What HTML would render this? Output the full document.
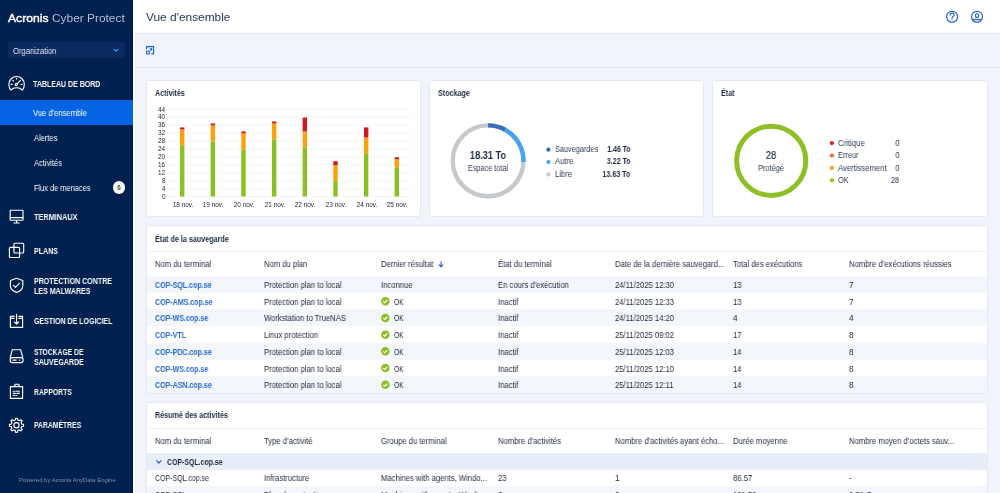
<!DOCTYPE html>
<html><head><meta charset="utf-8">
<style>
*{box-sizing:border-box;margin:0;padding:0}
html,body{width:1000px;height:493px;overflow:hidden;background:#f1f5fb;font-family:"Liberation Sans",sans-serif;color:#243550}
.t{position:absolute;line-height:1;white-space:nowrap;will-change:transform}
.b{position:absolute}
svg{position:absolute;left:0;top:0;overflow:visible}
</style></head><body>
<div class="b" style="left:0px;top:0px;width:133px;height:493px;background:#00214f;"></div>
<div class="b" style="left:132px;top:0px;width:1px;height:493px;background:#001645;"></div>
<div class="b" style="left:8.3px;top:41.8px;width:116.7px;height:16.7px;background:#0a2b5f;border-radius:2.5px"></div>
<div class="b" style="left:0px;top:100px;width:133px;height:25px;background:#0363e2;"></div>
<div class="t" style="top:13px;font-size:11.5px;color:#ffffff;left:8.40px;transform:scaleX(1.056);transform-origin:left 0;-webkit-text-stroke:0.4px #ffffff;">Acronis</div>
<div class="t" style="top:13px;font-size:11.5px;color:#b4bed2;left:51.50px;transform:scaleX(1.034);transform-origin:left 0;">Cyber Protect</div>
<div class="t" style="top:48px;font-size:8.2px;color:#dfe6f2;left:13.00px;transform:scaleX(0.936);transform-origin:left 0;">Organization</div>
<div class="t" style="top:81px;font-size:8.2px;color:#fafbfd;font-weight:bold;left:33.20px;transform:scaleX(0.858);transform-origin:left 0;">TABLEAU DE BORD</div>
<div class="t" style="top:110px;font-size:8.2px;color:#ffffff;left:33.20px;transform:scaleX(0.929);transform-origin:left 0;">Vue d'ensemble</div>
<div class="t" style="top:135px;font-size:8.2px;color:#fafbfd;left:33.50px;transform:scaleX(0.915);transform-origin:left 0;">Alertes</div>
<div class="t" style="top:160px;font-size:8.2px;color:#fafbfd;left:33.50px;transform:scaleX(0.915);transform-origin:left 0;">Activités</div>
<div class="t" style="top:185px;font-size:8.2px;color:#fafbfd;left:33.50px;transform:scaleX(0.905);transform-origin:left 0;">Flux de menaces</div>
<div class="t" style="top:214px;font-size:8.2px;color:#fafbfd;font-weight:bold;left:33.50px;transform:scaleX(0.892);transform-origin:left 0;">TERMINAUX</div>
<div class="t" style="top:248px;font-size:8.2px;color:#fafbfd;font-weight:bold;left:33.50px;transform:scaleX(0.862);transform-origin:left 0;">PLANS</div>
<div class="t" style="top:278px;font-size:8.2px;color:#fafbfd;font-weight:bold;left:33.50px;transform:scaleX(0.861);transform-origin:left 0;">PROTECTION CONTRE</div>
<div class="t" style="top:288px;font-size:8.2px;color:#fafbfd;font-weight:bold;left:33.50px;transform:scaleX(0.862);transform-origin:left 0;">LES MALWARES</div>
<div class="t" style="top:318px;font-size:8.2px;color:#fafbfd;font-weight:bold;left:33.50px;transform:scaleX(0.857);transform-origin:left 0;">GESTION DE LOGICIEL</div>
<div class="t" style="top:349px;font-size:8.2px;color:#fafbfd;font-weight:bold;left:33.50px;transform:scaleX(0.825);transform-origin:left 0;">STOCKAGE DE</div>
<div class="t" style="top:359px;font-size:8.2px;color:#fafbfd;font-weight:bold;left:33.50px;transform:scaleX(0.862);transform-origin:left 0;">SAUVEGARDE</div>
<div class="t" style="top:389px;font-size:8.2px;color:#fafbfd;font-weight:bold;left:33.50px;transform:scaleX(0.832);transform-origin:left 0;">RAPPORTS</div>
<div class="t" style="top:422px;font-size:8.2px;color:#fafbfd;font-weight:bold;left:33.50px;transform:scaleX(0.833);transform-origin:left 0;">PARAMÈTRES</div>
<div class="t" style="top:478px;font-size:5.95px;color:#8290ab;left:18.50px;">Powered by Acronis AnyData Engine</div>
<div class="b" style="left:112.7px;top:181.3px;width:12.6px;height:12.6px;background:#fff;border-radius:50%"></div>
<div class="t" style="top:185px;font-size:6.3px;color:#3e4658;font-weight:bold;left:-30.90px;width:300px;text-align:center;">6</div>
<div class="b" style="left:133px;top:0px;width:867px;height:33px;background:#fff;"></div>
<div class="b" style="left:133px;top:0px;width:2px;height:493px;background:#fff;"></div>
<div class="b" style="left:135px;top:33px;width:865px;height:1px;background:#dde6f4;"></div>
<div class="b" style="left:135px;top:67px;width:865px;height:1px;background:#e3eaf6;"></div>
<div class="t" style="top:12px;font-size:11.5px;color:#273650;left:146.00px;transform:scaleX(1.034);transform-origin:left 0;">Vue d'ensemble</div>
<div class="b" style="left:146px;top:80px;width:275px;height:137px;background:#fff;border:1px solid #e4e9f1;border-radius:3px"></div>
<div class="b" style="left:429px;top:80px;width:275px;height:137px;background:#fff;border:1px solid #e4e9f1;border-radius:3px"></div>
<div class="b" style="left:712px;top:80px;width:276px;height:137px;background:#fff;border:1px solid #e4e9f1;border-radius:3px"></div>
<div class="b" style="left:146px;top:225px;width:842px;height:169px;background:#fff;border:1px solid #e4e9f1;border-radius:3px"></div>
<div class="b" style="left:146px;top:402px;width:842px;height:120px;background:#fff;border:1px solid #e4e9f1;border-radius:3px"></div>
<div class="t" style="top:90px;font-size:8.2px;color:#1e2a40;font-weight:bold;left:154.70px;transform:scaleX(0.875);transform-origin:left 0;">Activités</div>
<div class="t" style="top:90px;font-size:8.2px;color:#1e2a40;font-weight:bold;left:437.70px;transform:scaleX(0.875);transform-origin:left 0;">Stockage</div>
<div class="t" style="top:90px;font-size:8.2px;color:#1e2a40;font-weight:bold;left:721.30px;transform:scaleX(0.875);transform-origin:left 0;">État</div>
<div class="t" style="top:236px;font-size:8.2px;color:#1e2a40;font-weight:bold;left:154.70px;transform:scaleX(0.875);transform-origin:left 0;">État de la sauvegarde</div>
<div class="t" style="top:412px;font-size:8.2px;color:#1e2a40;font-weight:bold;left:154.70px;transform:scaleX(0.875);transform-origin:left 0;">Résumé des activités</div>
<svg width="1000" height="493"><line x1="167.4" x2="411.5" y1="196.50" y2="196.50" stroke="#edf1f7" stroke-width="0.8"/><line x1="167.4" x2="411.5" y1="188.55" y2="188.55" stroke="#edf1f7" stroke-width="0.8"/><line x1="167.4" x2="411.5" y1="180.60" y2="180.60" stroke="#edf1f7" stroke-width="0.8"/><line x1="167.4" x2="411.5" y1="172.66" y2="172.66" stroke="#edf1f7" stroke-width="0.8"/><line x1="167.4" x2="411.5" y1="164.71" y2="164.71" stroke="#edf1f7" stroke-width="0.8"/><line x1="167.4" x2="411.5" y1="156.76" y2="156.76" stroke="#edf1f7" stroke-width="0.8"/><line x1="167.4" x2="411.5" y1="148.81" y2="148.81" stroke="#edf1f7" stroke-width="0.8"/><line x1="167.4" x2="411.5" y1="140.86" y2="140.86" stroke="#edf1f7" stroke-width="0.8"/><line x1="167.4" x2="411.5" y1="132.92" y2="132.92" stroke="#edf1f7" stroke-width="0.8"/><line x1="167.4" x2="411.5" y1="124.97" y2="124.97" stroke="#edf1f7" stroke-width="0.8"/><line x1="167.4" x2="411.5" y1="117.02" y2="117.02" stroke="#edf1f7" stroke-width="0.8"/><line x1="167.4" x2="411.5" y1="109.07" y2="109.07" stroke="#edf1f7" stroke-width="0.8"/><rect x="180.00" y="145.34" width="4.4" height="51.16" fill="#8cbf21"/><rect x="180.00" y="129.44" width="4.4" height="15.90" fill="#fca10b"/><rect x="180.00" y="127.45" width="4.4" height="1.99" fill="#d0191f"/><rect x="210.66" y="141.36" width="4.4" height="55.14" fill="#8cbf21"/><rect x="210.66" y="125.47" width="4.4" height="15.90" fill="#fca10b"/><rect x="210.66" y="123.48" width="4.4" height="1.99" fill="#d0191f"/><rect x="241.32" y="149.31" width="4.4" height="47.19" fill="#8cbf21"/><rect x="241.32" y="133.42" width="4.4" height="15.90" fill="#fca10b"/><rect x="241.32" y="131.43" width="4.4" height="1.99" fill="#d0191f"/><rect x="271.98" y="139.38" width="4.4" height="57.12" fill="#8cbf21"/><rect x="271.98" y="123.48" width="4.4" height="15.90" fill="#fca10b"/><rect x="271.98" y="121.49" width="4.4" height="1.99" fill="#d0191f"/><rect x="302.64" y="147.32" width="4.4" height="49.18" fill="#8cbf21"/><rect x="302.64" y="131.43" width="4.4" height="15.90" fill="#fca10b"/><rect x="302.64" y="117.52" width="4.4" height="13.91" fill="#d0191f"/><rect x="333.30" y="181.10" width="4.4" height="15.40" fill="#8cbf21"/><rect x="333.30" y="165.21" width="4.4" height="15.90" fill="#fca10b"/><rect x="333.30" y="161.23" width="4.4" height="3.97" fill="#d0191f"/><rect x="363.96" y="153.29" width="4.4" height="43.21" fill="#8cbf21"/><rect x="363.96" y="137.39" width="4.4" height="15.90" fill="#fca10b"/><rect x="363.96" y="127.45" width="4.4" height="9.94" fill="#d0191f"/><rect x="394.62" y="167.19" width="4.4" height="29.30" fill="#8cbf21"/><rect x="394.62" y="159.25" width="4.4" height="7.95" fill="#fca10b"/><rect x="394.62" y="157.26" width="4.4" height="1.99" fill="#d0191f"/></svg>
<div class="t" style="top:194px;font-size:6.4px;color:#1c2430;right:834.80px;">0</div>
<div class="t" style="top:186px;font-size:6.4px;color:#1c2430;right:834.80px;">4</div>
<div class="t" style="top:178px;font-size:6.4px;color:#1c2430;right:834.80px;">8</div>
<div class="t" style="top:170px;font-size:6.4px;color:#1c2430;right:834.80px;">12</div>
<div class="t" style="top:162px;font-size:6.4px;color:#1c2430;right:834.80px;">16</div>
<div class="t" style="top:154px;font-size:6.4px;color:#1c2430;right:834.80px;">20</div>
<div class="t" style="top:146px;font-size:6.4px;color:#1c2430;right:834.80px;">24</div>
<div class="t" style="top:138px;font-size:6.4px;color:#1c2430;right:834.80px;">28</div>
<div class="t" style="top:130px;font-size:6.4px;color:#1c2430;right:834.80px;">32</div>
<div class="t" style="top:122px;font-size:6.4px;color:#1c2430;right:834.80px;">36</div>
<div class="t" style="top:114px;font-size:6.4px;color:#1c2430;right:834.80px;">40</div>
<div class="t" style="top:107px;font-size:6.4px;color:#1c2430;right:834.80px;">44</div>
<div class="t" style="top:202px;font-size:6.4px;color:#1c2430;left:32.70px;width:300px;text-align:center;">18 nov.</div>
<div class="t" style="top:202px;font-size:6.4px;color:#1c2430;left:63.36px;width:300px;text-align:center;">19 nov.</div>
<div class="t" style="top:202px;font-size:6.4px;color:#1c2430;left:94.02px;width:300px;text-align:center;">20 nov.</div>
<div class="t" style="top:202px;font-size:6.4px;color:#1c2430;left:124.68px;width:300px;text-align:center;">21 nov.</div>
<div class="t" style="top:202px;font-size:6.4px;color:#1c2430;left:155.34px;width:300px;text-align:center;">22 nov.</div>
<div class="t" style="top:202px;font-size:6.4px;color:#1c2430;left:186.00px;width:300px;text-align:center;">23 nov.</div>
<div class="t" style="top:202px;font-size:6.4px;color:#1c2430;left:216.66px;width:300px;text-align:center;">24 nov.</div>
<div class="t" style="top:202px;font-size:6.4px;color:#1c2430;left:247.32px;width:300px;text-align:center;">25 nov.</div>
<svg width="1000" height="493"><circle cx="488.1" cy="160.8" r="35.4" fill="none" stroke="#c5c8cc" stroke-width="4.4"/><path d="M488.100 125.400A35.4 35.4 0 0 1 505.103 129.751" fill="none" stroke="#3a6cb5" stroke-width="4.4"/><path d="M505.103 129.751A35.4 35.4 0 0 1 523.478 162.045" fill="none" stroke="#44a3f2" stroke-width="4.4"/><circle cx="548.4" cy="149.7" r="2.1" fill="#3a6cb5"/><circle cx="548.4" cy="162" r="2.1" fill="#44a3f2"/><circle cx="548.4" cy="174.4" r="2.1" fill="#c5c8cc"/><circle cx="771.2" cy="160.8" r="34.6" fill="none" stroke="#8fbf26" stroke-width="5"/><circle cx="831.9" cy="143.1" r="2.1" fill="#d7262c"/><circle cx="831.9" cy="155.5" r="2.1" fill="#f26a1b"/><circle cx="831.9" cy="167.9" r="2.1" fill="#fca10b"/><circle cx="831.9" cy="180.3" r="2.1" fill="#8fbf26"/></svg>
<div class="t" style="top:151px;font-size:10px;color:#1e2a40;font-weight:bold;left:338.00px;width:300px;text-align:center;transform:scaleX(0.917);transform-origin:center 0;">18.31 To</div>
<div class="t" style="top:165px;font-size:8.2px;color:#2e3a50;left:338.00px;width:300px;text-align:center;transform:scaleX(0.891);transform-origin:center 0;">Espace total</div>
<div class="t" style="top:146px;font-size:8.2px;color:#2e3a50;left:554.70px;transform:scaleX(0.894);transform-origin:left 0;">Sauvegardes</div>
<div class="t" style="top:146px;font-size:8.2px;color:#1e2a40;font-weight:bold;right:369.70px;transform:scaleX(0.846);transform-origin:right 0;">1.46 To</div>
<div class="t" style="top:158px;font-size:8.2px;color:#2e3a50;left:554.70px;transform:scaleX(0.939);transform-origin:left 0;">Autre</div>
<div class="t" style="top:158px;font-size:8.2px;color:#1e2a40;font-weight:bold;right:369.70px;transform:scaleX(0.861);transform-origin:right 0;">3.22 To</div>
<div class="t" style="top:171px;font-size:8.2px;color:#2e3a50;left:554.70px;transform:scaleX(0.938);transform-origin:left 0;">Libre</div>
<div class="t" style="top:171px;font-size:8.2px;color:#1e2a40;font-weight:bold;right:369.70px;transform:scaleX(0.860);transform-origin:right 0;">13.63 To</div>
<div class="t" style="top:151px;font-size:10px;color:#1e2a40;left:621.30px;width:300px;text-align:center;transform:scaleX(0.935);transform-origin:center 0;-webkit-text-stroke:0.2px #243550;">28</div>
<div class="t" style="top:165px;font-size:8.2px;color:#2e3a50;left:621.20px;width:300px;text-align:center;transform:scaleX(0.902);transform-origin:center 0;">Protégé</div>
<div class="t" style="top:140px;font-size:8.2px;color:#2e3a50;left:837.90px;transform:scaleX(0.948);transform-origin:left 0;">Critique</div>
<div class="t" style="top:140px;font-size:8.2px;color:#1e2a40;right:100.80px;transform:scaleX(0.900);transform-origin:right 0;">0</div>
<div class="t" style="top:152px;font-size:8.2px;color:#2e3a50;left:837.90px;transform:scaleX(0.900);transform-origin:left 0;">Erreur</div>
<div class="t" style="top:152px;font-size:8.2px;color:#1e2a40;right:100.80px;transform:scaleX(0.900);transform-origin:right 0;">0</div>
<div class="t" style="top:165px;font-size:8.2px;color:#2e3a50;left:837.90px;transform:scaleX(0.940);transform-origin:left 0;">Avertissement</div>
<div class="t" style="top:165px;font-size:8.2px;color:#1e2a40;right:100.80px;transform:scaleX(0.900);transform-origin:right 0;">0</div>
<div class="t" style="top:177px;font-size:8.2px;color:#2e3a50;left:837.90px;transform:scaleX(0.900);transform-origin:left 0;">OK</div>
<div class="t" style="top:177px;font-size:8.2px;color:#1e2a40;right:100.80px;transform:scaleX(0.900);transform-origin:right 0;">28</div>
<div class="b" style="left:147px;top:251px;width:840px;height:1px;background:#eef2f7;"></div>
<div class="t" style="top:261px;font-size:8.2px;color:#222d40;left:154.70px;transform:scaleX(0.935);transform-origin:left 0;">Nom du terminal</div>
<div class="t" style="top:261px;font-size:8.2px;color:#222d40;left:263.80px;transform:scaleX(0.935);transform-origin:left 0;">Nom du plan</div>
<div class="t" style="top:261px;font-size:8.2px;color:#222d40;left:380.80px;transform:scaleX(0.935);transform-origin:left 0;">Dernier résultat</div>
<div class="t" style="top:261px;font-size:8.2px;color:#222d40;left:498.30px;transform:scaleX(0.935);transform-origin:left 0;">État du terminal</div>
<div class="t" style="top:261px;font-size:8.2px;color:#222d40;left:615.30px;transform:scaleX(0.935);transform-origin:left 0;">Date de la dernière sauvegard...</div>
<div class="t" style="top:261px;font-size:8.2px;color:#222d40;left:732.50px;transform:scaleX(0.935);transform-origin:left 0;">Total des exécutions</div>
<div class="t" style="top:261px;font-size:8.2px;color:#222d40;left:849.30px;transform:scaleX(0.935);transform-origin:left 0;">Nombre d’exécutions réussies</div>
<div class="b" style="left:147px;top:276.0px;width:840px;height:16.71px;background:#f3f6fb;"></div>
<div class="b" style="left:147px;top:309.42px;width:840px;height:16.71px;background:#f3f6fb;"></div>
<div class="b" style="left:147px;top:342.84px;width:840px;height:16.71px;background:#f3f6fb;"></div>
<div class="b" style="left:147px;top:376.26px;width:840px;height:16.71px;background:#f3f6fb;"></div>
<div class="t" style="top:282px;font-size:8.2px;color:#2a6ad0;font-weight:bold;left:154.70px;transform:scaleX(0.860);transform-origin:left 0;">COP-SQL.cop.se</div>
<div class="t" style="top:282px;font-size:8.2px;color:#222d40;left:263.80px;transform:scaleX(0.935);transform-origin:left 0;">Protection plan to local</div>
<div class="t" style="top:282px;font-size:8.2px;color:#222d40;left:380.80px;transform:scaleX(0.935);transform-origin:left 0;">Inconnue</div>
<div class="t" style="top:282px;font-size:8.2px;color:#222d40;left:498.30px;transform:scaleX(0.935);transform-origin:left 0;">En cours d'exécution</div>
<div class="t" style="top:282px;font-size:8.2px;color:#222d40;left:615.30px;transform:scaleX(0.935);transform-origin:left 0;">24/11/2025 12:30</div>
<div class="t" style="top:282px;font-size:8.2px;color:#222d40;left:732.50px;transform:scaleX(0.935);transform-origin:left 0;">13</div>
<div class="t" style="top:282px;font-size:8.2px;color:#222d40;left:849.30px;transform:scaleX(0.935);transform-origin:left 0;">7</div>
<div class="t" style="top:299px;font-size:8.2px;color:#2a6ad0;font-weight:bold;left:154.70px;transform:scaleX(0.860);transform-origin:left 0;">COP-AMS.cop.se</div>
<div class="t" style="top:299px;font-size:8.2px;color:#222d40;left:263.80px;transform:scaleX(0.935);transform-origin:left 0;">Protection plan to local</div>
<div class="t" style="top:299px;font-size:8.2px;color:#222d40;left:393.90px;transform:scaleX(0.819);transform-origin:left 0;">OK</div>
<div class="t" style="top:299px;font-size:8.2px;color:#222d40;left:498.30px;transform:scaleX(0.935);transform-origin:left 0;">Inactif</div>
<div class="t" style="top:299px;font-size:8.2px;color:#222d40;left:615.30px;transform:scaleX(0.935);transform-origin:left 0;">24/11/2025 12:33</div>
<div class="t" style="top:299px;font-size:8.2px;color:#222d40;left:732.50px;transform:scaleX(0.935);transform-origin:left 0;">13</div>
<div class="t" style="top:299px;font-size:8.2px;color:#222d40;left:849.30px;transform:scaleX(0.935);transform-origin:left 0;">7</div>
<div class="t" style="top:315px;font-size:8.2px;color:#2a6ad0;font-weight:bold;left:154.70px;transform:scaleX(0.860);transform-origin:left 0;">COP-WS.cop.se</div>
<div class="t" style="top:315px;font-size:8.2px;color:#222d40;left:263.80px;transform:scaleX(0.935);transform-origin:left 0;">Workstation to TrueNAS</div>
<div class="t" style="top:315px;font-size:8.2px;color:#222d40;left:393.90px;transform:scaleX(0.819);transform-origin:left 0;">OK</div>
<div class="t" style="top:315px;font-size:8.2px;color:#222d40;left:498.30px;transform:scaleX(0.935);transform-origin:left 0;">Inactif</div>
<div class="t" style="top:315px;font-size:8.2px;color:#222d40;left:615.30px;transform:scaleX(0.935);transform-origin:left 0;">24/11/2025 14:20</div>
<div class="t" style="top:315px;font-size:8.2px;color:#222d40;left:732.50px;transform:scaleX(0.935);transform-origin:left 0;">4</div>
<div class="t" style="top:315px;font-size:8.2px;color:#222d40;left:849.30px;transform:scaleX(0.935);transform-origin:left 0;">4</div>
<div class="t" style="top:332px;font-size:8.2px;color:#2a6ad0;font-weight:bold;left:154.70px;transform:scaleX(0.860);transform-origin:left 0;">COP-VTL</div>
<div class="t" style="top:332px;font-size:8.2px;color:#222d40;left:263.80px;transform:scaleX(0.935);transform-origin:left 0;">Linux protection</div>
<div class="t" style="top:332px;font-size:8.2px;color:#222d40;left:393.90px;transform:scaleX(0.819);transform-origin:left 0;">OK</div>
<div class="t" style="top:332px;font-size:8.2px;color:#222d40;left:498.30px;transform:scaleX(0.935);transform-origin:left 0;">Inactif</div>
<div class="t" style="top:332px;font-size:8.2px;color:#222d40;left:615.30px;transform:scaleX(0.935);transform-origin:left 0;">25/11/2025 09:02</div>
<div class="t" style="top:332px;font-size:8.2px;color:#222d40;left:732.50px;transform:scaleX(0.935);transform-origin:left 0;">17</div>
<div class="t" style="top:332px;font-size:8.2px;color:#222d40;left:849.30px;transform:scaleX(0.935);transform-origin:left 0;">8</div>
<div class="t" style="top:349px;font-size:8.2px;color:#2a6ad0;font-weight:bold;left:154.70px;transform:scaleX(0.860);transform-origin:left 0;">COP-PDC.cop.se</div>
<div class="t" style="top:349px;font-size:8.2px;color:#222d40;left:263.80px;transform:scaleX(0.935);transform-origin:left 0;">Protection plan to local</div>
<div class="t" style="top:349px;font-size:8.2px;color:#222d40;left:393.90px;transform:scaleX(0.819);transform-origin:left 0;">OK</div>
<div class="t" style="top:349px;font-size:8.2px;color:#222d40;left:498.30px;transform:scaleX(0.935);transform-origin:left 0;">Inactif</div>
<div class="t" style="top:349px;font-size:8.2px;color:#222d40;left:615.30px;transform:scaleX(0.935);transform-origin:left 0;">25/11/2025 12:03</div>
<div class="t" style="top:349px;font-size:8.2px;color:#222d40;left:732.50px;transform:scaleX(0.935);transform-origin:left 0;">14</div>
<div class="t" style="top:349px;font-size:8.2px;color:#222d40;left:849.30px;transform:scaleX(0.935);transform-origin:left 0;">8</div>
<div class="t" style="top:366px;font-size:8.2px;color:#2a6ad0;font-weight:bold;left:154.70px;transform:scaleX(0.860);transform-origin:left 0;">COP-WS.cop.se</div>
<div class="t" style="top:366px;font-size:8.2px;color:#222d40;left:263.80px;transform:scaleX(0.935);transform-origin:left 0;">Protection plan to local</div>
<div class="t" style="top:366px;font-size:8.2px;color:#222d40;left:393.90px;transform:scaleX(0.819);transform-origin:left 0;">OK</div>
<div class="t" style="top:366px;font-size:8.2px;color:#222d40;left:498.30px;transform:scaleX(0.935);transform-origin:left 0;">Inactif</div>
<div class="t" style="top:366px;font-size:8.2px;color:#222d40;left:615.30px;transform:scaleX(0.935);transform-origin:left 0;">25/11/2025 12:10</div>
<div class="t" style="top:366px;font-size:8.2px;color:#222d40;left:732.50px;transform:scaleX(0.935);transform-origin:left 0;">14</div>
<div class="t" style="top:366px;font-size:8.2px;color:#222d40;left:849.30px;transform:scaleX(0.935);transform-origin:left 0;">8</div>
<div class="t" style="top:382px;font-size:8.2px;color:#2a6ad0;font-weight:bold;left:154.70px;transform:scaleX(0.860);transform-origin:left 0;">COP-ASN.cop.se</div>
<div class="t" style="top:382px;font-size:8.2px;color:#222d40;left:263.80px;transform:scaleX(0.935);transform-origin:left 0;">Protection plan to local</div>
<div class="t" style="top:382px;font-size:8.2px;color:#222d40;left:393.90px;transform:scaleX(0.819);transform-origin:left 0;">OK</div>
<div class="t" style="top:382px;font-size:8.2px;color:#222d40;left:498.30px;transform:scaleX(0.935);transform-origin:left 0;">Inactif</div>
<div class="t" style="top:382px;font-size:8.2px;color:#222d40;left:615.30px;transform:scaleX(0.935);transform-origin:left 0;">25/11/2025 12:11</div>
<div class="t" style="top:382px;font-size:8.2px;color:#222d40;left:732.50px;transform:scaleX(0.935);transform-origin:left 0;">14</div>
<div class="t" style="top:382px;font-size:8.2px;color:#222d40;left:849.30px;transform:scaleX(0.935);transform-origin:left 0;">8</div>
<svg width="1000" height="493"><circle cx="385.4" cy="301.21" r="4.25" fill="#8fbf26"/><path d="M383.3 301.31l1.4 1.4 2.7-2.7" fill="none" stroke="#fff" stroke-width="1.1"/><circle cx="385.4" cy="317.92" r="4.25" fill="#8fbf26"/><path d="M383.3 318.02l1.4 1.4 2.7-2.7" fill="none" stroke="#fff" stroke-width="1.1"/><circle cx="385.4" cy="334.63" r="4.25" fill="#8fbf26"/><path d="M383.3 334.73l1.4 1.4 2.7-2.7" fill="none" stroke="#fff" stroke-width="1.1"/><circle cx="385.4" cy="351.34" r="4.25" fill="#8fbf26"/><path d="M383.3 351.44l1.4 1.4 2.7-2.7" fill="none" stroke="#fff" stroke-width="1.1"/><circle cx="385.4" cy="368.05" r="4.25" fill="#8fbf26"/><path d="M383.3 368.15l1.4 1.4 2.7-2.7" fill="none" stroke="#fff" stroke-width="1.1"/><circle cx="385.4" cy="384.76" r="4.25" fill="#8fbf26"/><path d="M383.3 384.86l1.4 1.4 2.7-2.7" fill="none" stroke="#fff" stroke-width="1.1"/><path d="M441.1 261.5v5M439 264.6l2.1 2.3 2.1-2.3" fill="none" stroke="#2a6ad0" stroke-width="1.2"/></svg>
<div class="b" style="left:147px;top:428px;width:840px;height:1px;background:#eef2f7;"></div>
<div class="t" style="top:438px;font-size:8.2px;color:#222d40;left:154.70px;transform:scaleX(0.935);transform-origin:left 0;">Nom du terminal</div>
<div class="t" style="top:438px;font-size:8.2px;color:#222d40;left:263.80px;transform:scaleX(0.935);transform-origin:left 0;">Type d’activité</div>
<div class="t" style="top:438px;font-size:8.2px;color:#222d40;left:380.80px;transform:scaleX(0.935);transform-origin:left 0;">Groupe du terminal</div>
<div class="t" style="top:438px;font-size:8.2px;color:#222d40;left:498.30px;transform:scaleX(0.935);transform-origin:left 0;">Nombre d’activités</div>
<div class="t" style="top:438px;font-size:8.2px;color:#222d40;left:615.30px;transform:scaleX(0.935);transform-origin:left 0;">Nombre d’activités ayant écho...</div>
<div class="t" style="top:438px;font-size:8.2px;color:#222d40;left:732.50px;transform:scaleX(0.935);transform-origin:left 0;">Durée moyenne</div>
<div class="t" style="top:438px;font-size:8.2px;color:#222d40;left:849.30px;transform:scaleX(0.935);transform-origin:left 0;">Nombre moyen d’octets sauv...</div>
<div class="b" style="left:147px;top:453px;width:840px;height:16.5px;background:#e7eef8;"></div>
<svg width="1000" height="493"><path d="M156.3 460.4l2.6 2.6 2.6-2.6" fill="none" stroke="#2a6ad0" stroke-width="1.3"/></svg>
<div class="t" style="top:459px;font-size:8.2px;color:#1e2a40;font-weight:bold;left:167.00px;transform:scaleX(0.846);transform-origin:left 0;">COP-SQL.cop.se</div>
<div class="b" style="left:147px;top:486.2px;width:840px;height:16.7px;background:#f3f6fb;"></div>
<div class="t" style="top:475px;font-size:8.2px;color:#222d40;left:154.70px;transform:scaleX(0.852);transform-origin:left 0;">COP-SQL.cop.se</div>
<div class="t" style="top:475px;font-size:8.2px;color:#222d40;left:263.80px;transform:scaleX(0.935);transform-origin:left 0;">Infrastructure</div>
<div class="t" style="top:475px;font-size:8.2px;color:#222d40;left:380.80px;transform:scaleX(0.935);transform-origin:left 0;">Machines with agents, Windo...</div>
<div class="t" style="top:475px;font-size:8.2px;color:#222d40;left:498.30px;transform:scaleX(0.935);transform-origin:left 0;">23</div>
<div class="t" style="top:475px;font-size:8.2px;color:#222d40;left:615.30px;transform:scaleX(0.935);transform-origin:left 0;">1</div>
<div class="t" style="top:475px;font-size:8.2px;color:#222d40;left:732.50px;transform:scaleX(0.935);transform-origin:left 0;">86.57</div>
<div class="t" style="top:475px;font-size:8.2px;color:#222d40;left:849.30px;transform:scaleX(0.935);transform-origin:left 0;">-</div>
<div class="t" style="top:492px;font-size:8.2px;color:#222d40;left:154.70px;transform:scaleX(0.852);transform-origin:left 0;">COP-SQL.cop.se</div>
<div class="t" style="top:492px;font-size:8.2px;color:#222d40;left:263.80px;transform:scaleX(0.935);transform-origin:left 0;">Plan de protection</div>
<div class="t" style="top:492px;font-size:8.2px;color:#222d40;left:380.80px;transform:scaleX(0.935);transform-origin:left 0;">Machines with agents, Windo...</div>
<div class="t" style="top:492px;font-size:8.2px;color:#222d40;left:498.30px;transform:scaleX(0.935);transform-origin:left 0;">6</div>
<div class="t" style="top:492px;font-size:8.2px;color:#222d40;left:615.30px;transform:scaleX(0.935);transform-origin:left 0;">0</div>
<div class="t" style="top:492px;font-size:8.2px;color:#222d40;left:732.50px;transform:scaleX(0.935);transform-origin:left 0;">161.50</div>
<div class="t" style="top:492px;font-size:8.2px;color:#222d40;left:849.30px;transform:scaleX(0.935);transform-origin:left 0;">2.31 Go</div>
<svg width="1000" height="493"><path d="M11.3 89.9H10.6Q8.9 88 8.9 84.2A7.7 7.7 0 0 1 24.3 84.2Q24.3 88 22.6 89.9H21.9Q20.6 87.7 16.6 87.7Q12.6 87.7 11.3 89.9Z" stroke="#ffffff" fill="none" stroke-width="1.15" stroke-linecap="round" stroke-linejoin="round"/><circle cx="16.3" cy="84.6" r="1.1" stroke="#ffffff" fill="none" stroke-width="1.15" stroke-linecap="round" stroke-linejoin="round"/><path d="M17.1 83.8L19.9 81M16.6 78.2v0.9M11.2 84.4h0.9M22 84.4h-0.9M12.8 80.4l0.6 0.6M20.4 80.4l-0.6 0.6" stroke="#ffffff" fill="none" stroke-width="1.15" stroke-linecap="round" stroke-linejoin="round"/><rect x="10.2" y="210.2" width="12.8" height="10" rx="0.6" stroke="#ffffff" fill="none" stroke-width="1.15" stroke-linecap="round" stroke-linejoin="round"/><path d="M10.2 217.6h12.8M16.6 220.2v2.6M14 223h5.2" stroke="#ffffff" fill="none" stroke-width="1.15" stroke-linecap="round" stroke-linejoin="round"/><rect x="13.9" y="243.2" width="9.8" height="9.8" rx="1" stroke="#ffffff" fill="none" stroke-width="1.15" stroke-linecap="round" stroke-linejoin="round"/><rect x="9.4" y="247.3" width="10.2" height="10.2" rx="1" stroke="#ffffff" fill="none" stroke-width="1.15" stroke-linecap="round" stroke-linejoin="round"/><path d="M16.6 278.3L22.8 280.5V285.5Q22.8 290.4 16.6 292.4Q10.4 290.4 10.4 285.5V280.5Z" stroke="#ffffff" fill="none" stroke-width="1.15" stroke-linecap="round" stroke-linejoin="round"/><path d="M13.5 285.4l2 2 3.9-4" stroke="#ffffff" fill="none" stroke-width="1.15" stroke-linecap="round" stroke-linejoin="round"/><path d="M14.2 316.3H10.4V327.4H22.6V316.3H18.9M10.4 318.3H14.2M18.9 318.3H22.6M16.6 314.2V324M14.5 322l2.1 2.1 2.1-2.1" stroke="#ffffff" fill="none" stroke-width="1.15" stroke-linecap="round" stroke-linejoin="round"/><path d="M12.3 349.7H20.6L22.8 357.6M10.2 357.6L12.3 349.7" stroke="#ffffff" fill="none" stroke-width="1.15" stroke-linecap="round" stroke-linejoin="round"/><rect x="10.2" y="357.6" width="12.9" height="5" rx="2.2" stroke="#ffffff" fill="none" stroke-width="1.15" stroke-linecap="round" stroke-linejoin="round"/><path d="M12.9 360.1h3.3M19.4 360.1h0.4" stroke="#ffffff" fill="none" stroke-width="1.15" stroke-linecap="round" stroke-linejoin="round"/><path d="M14.2 386.6H10.4V398.4H22.6V386.6H19.6M14.2 386.6L15.3 384.2H18.6L19.6 386.6Z" stroke="#ffffff" fill="none" stroke-width="1.15" stroke-linecap="round" stroke-linejoin="round"/><path d="M13.2 391.2h1.2M15.8 391.2h3.5M13.2 393.4h2.2M16.9 393.4h2.4M13.2 395.5h1.2M15.8 395.5h1" stroke="#ffffff" fill="none" stroke-width="1.15" stroke-linecap="round" stroke-linejoin="round"/><path d="M15.32 420.03L15.58 418.26L17.42 418.26L17.68 420.03L19.39 420.74L20.83 419.67L22.13 420.97L21.06 422.41L21.77 424.12L23.54 424.38L23.54 426.22L21.77 426.48L21.06 428.19L22.13 429.63L20.83 430.93L19.39 429.86L17.68 430.57L17.42 432.34L15.58 432.34L15.32 430.57L13.61 429.86L12.17 430.93L10.87 429.63L11.94 428.19L11.23 426.48L9.46 426.22L9.46 424.38L11.23 424.12L11.94 422.41L10.87 420.97L12.17 419.67L13.61 420.74Z" stroke="#ffffff" fill="none" stroke-width="1.15" stroke-linecap="round" stroke-linejoin="round"/><circle cx="16.5" cy="425.3" r="2.6" stroke="#ffffff" fill="none" stroke-width="1.15" stroke-linecap="round" stroke-linejoin="round"/><path d="M113.8 49.3l2.1 1.9 2.1-1.9" fill="none" stroke="#3b86e8" stroke-width="1.2" stroke-linecap="round"/><circle cx="952.1" cy="16.8" r="5.5" stroke="#2764cc" fill="none" stroke-width="1.25"/><path d="M950.2 15.1Q950.3 13.1 952.2 13.1Q954.1 13.1 954.1 14.9Q954.1 16 952.6 16.7Q952.1 17 952.1 18.3" stroke="#2764cc" fill="none" stroke-width="1.25" stroke-width="1.35" stroke-linecap="round"/><circle cx="952.1" cy="20" r="0.6" fill="#2764cc"/><circle cx="977" cy="16.8" r="5.5" stroke="#2764cc" fill="none" stroke-width="1.25"/><ellipse cx="977" cy="15.6" rx="1.6" ry="2" stroke="#2764cc" fill="none" stroke-width="1.25"/><path d="M972.4 19.6H981.6" stroke="#2764cc" fill="none" stroke-width="1.25"/><path d="M146.6 49.2V46.6H153.6V53.9H151.4" stroke="#1f5fcf" fill="none" stroke-width="1.1"/><rect x="146.6" y="51.1" width="2.7" height="2.8" stroke="#1f5fcf" fill="none" stroke-width="1"/><path d="M149.2 51.2L151 49.4" stroke="#1f5fcf" fill="none" stroke-width="1"/><path d="M149.3 48.2H152.1V51Z" fill="#1f5fcf"/></svg>
</body></html>
